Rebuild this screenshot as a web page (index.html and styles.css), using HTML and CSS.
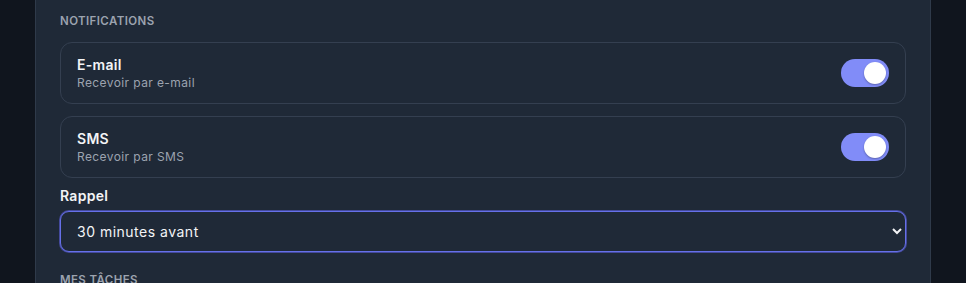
FILE: index.html
```html
<!DOCTYPE html>
<html lang="fr">

<head>
    <meta charset="UTF-8">
    <meta name="viewport" content="width=device-width, initial-scale=1.0">
    <title>Paramètres</title>
    <link rel="stylesheet" href="styles.css">
</head>

<body>
    <div class="panel">
        <h3 class="section-title">Notifications</h3>

        <div class="option-card">
            <div class="option-text">
                <div class="option-name">E-mail</div>
                <div class="option-desc">Recevoir par e-mail</div>
            </div>
            <label class="switch">
                <input type="checkbox" checked>
                <span class="slider"></span>
            </label>
        </div>

        <div class="option-card">
            <div class="option-text">
                <div class="option-name">SMS</div>
                <div class="option-desc">Recevoir par SMS</div>
            </div>
            <label class="switch">
                <input type="checkbox" checked>
                <span class="slider"></span>
            </label>
        </div>

        <label class="field-label" for="reminder">Rappel</label>
        <select id="reminder" class="field-select">
            <option>30 minutes avant</option>
            <option>1 heure avant</option>
            <option>1 jour avant</option>
        </select>

        <h3 class="section-title">Mes tâches</h3>
    </div>
</body>

</html>
```

FILE: styles.css
```css
body {
    font-family: Inter, "Noto Sans", sans-serif;
    background-color: #10151e;
    margin: 0;
    color: #f3f4f6;
    padding: 0 35px;
    height: 283px;
    overflow: hidden;
}

.panel {
    background-color: #1f2937;
    border-left: 1px solid #2f3a4a;
    border-right: 1px solid #2f3a4a;
    padding: 13px 24px 0;
    min-height: 300px;
}

.section-title {
    font-size: 11.5px;
    line-height: 16px;
    font-weight: 600;
    text-transform: uppercase;
    letter-spacing: 0.4px;
    color: #9ca3af;
    margin: 0 0 13px;
}

.option-card {
    display: flex;
    align-items: center;
    justify-content: space-between;
    border: 1px solid #343f50;
    border-radius: 12px;
    padding: 12px 16px;
    margin-bottom: 12px;
}

.option-name {
    font-size: 14px;
    line-height: 20px;
    font-weight: 600;
    letter-spacing: 0.3px;
    color: #f3f4f6;
}

.option-desc {
    font-size: 12px;
    line-height: 16px;
    letter-spacing: 0.4px;
    color: #9ca3af;
}

.switch {
    position: relative;
    display: inline-block;
    width: 48px;
    height: 28px;
}

.switch input {
    display: none;
}

.slider {
    position: absolute;
    inset: 0;
    background-color: #4b5563;
    border-radius: 14px;
}

.slider::before {
    content: "";
    position: absolute;
    top: 3px;
    left: 3px;
    width: 22px;
    height: 22px;
    border-radius: 50%;
    background-color: #fff;
    box-shadow: 0 1px 2px rgba(0, 0, 0, 0.3);
}

.switch input:checked + .slider {
    background-color: #818cf8;
}

.switch input:checked + .slider::before {
    left: 23px;
}

.field-label {
    display: block;
    font-size: 14px;
    line-height: 20px;
    font-weight: 600;
    letter-spacing: 0.3px;
    color: #f3f4f6;
    margin: -4px 0 5px;
}

.field-select {
    display: block;
    width: 100%;
    height: 41px;
    box-sizing: border-box;
    padding: 0 12px;
    font-family: inherit;
    font-size: 14px;
    letter-spacing: 0.5px;
    color: #f3f4f6;
    background-color: #1f2937;
    border: 1px solid #6670e8;
    border-radius: 9px;
    box-shadow: 0 0 0 1px rgba(99, 102, 241, 0.55);
    outline: none;
    margin-bottom: 20px;
}
```
